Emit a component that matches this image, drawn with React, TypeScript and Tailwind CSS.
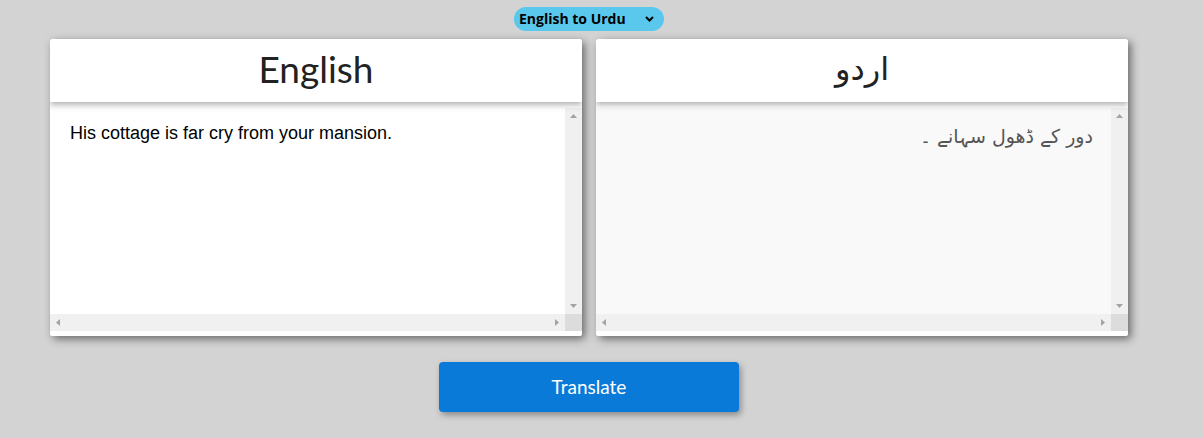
import { useState } from "react";

function ScrollArrow({ dir }: { dir: "up" | "down" | "left" | "right" }) {
  const paths: Record<string, string> = {
    up: "M0 4 L3.5 0 L7 4 Z",
    down: "M0 0 L7 0 L3.5 4 Z",
    left: "M4 0 L4 7 L0 3.5 Z",
    right: "M0 0 L4 3.5 L0 7 Z",
  };
  const vertical = dir === "up" || dir === "down";
  return (
    <svg
      width={vertical ? 7 : 4}
      height={vertical ? 4 : 7}
      viewBox={vertical ? "0 0 7 4" : "0 0 4 7"}
    >
      <path d={paths[dir]} fill="#a3a3a3" />
    </svg>
  );
}

function Panel({
  title,
  text,
  rtl,
}: {
  title: string;
  text: string;
  rtl?: boolean;
}) {
  return (
    <div className="w-[532px] h-[297px] bg-white rounded-[3px] shadow-[3px_3px_8px_rgba(0,0,0,0.5)] flex flex-col overflow-hidden">
      <div className="relative z-10 h-[63px] shrink-0 bg-white flex items-center justify-center shadow-[0_3px_6px_rgba(0,0,0,0.3)]">
        <span
          className={`${rtl ? "text-[32px]" : "text-[37px]"} text-[#222] leading-none pb-[4px]`}
          style={{ fontFamily: rtl ? "'DejaVu Sans', sans-serif" : "Lato, sans-serif" }}
        >
          {title}
        </span>
      </div>
      <div className={`flex-1 flex flex-col mt-[6px] ${rtl ? "bg-[#f9f9f9]" : "bg-white"}`}>
        <div className="flex-1 flex">
          <div
            dir={rtl ? "rtl" : "ltr"}
            className={`flex-1 ${
              rtl
                ? "pt-[14px] pr-[18px] text-[19px] text-[#555] font-['DejaVu_Sans',sans-serif]"
                : "pt-[12px] pl-[20px] text-[18px] text-black font-['Liberation_Sans',Arial,sans-serif]"
            }`}
          >
            {text}
          </div>
          <div className="w-[17px] bg-[#f0f0f0] flex flex-col items-center justify-between py-[6px]">
            <ScrollArrow dir="up" />
            <ScrollArrow dir="down" />
          </div>
        </div>
        <div className="h-[17px] flex">
          <div className="flex-1 bg-[#f0f0f0] flex items-center justify-between px-[6px]">
            <ScrollArrow dir="left" />
            <ScrollArrow dir="right" />
          </div>
          <div className="w-[17px] bg-[#dcdcdc]" />
        </div>
        <div className="h-[5px] bg-white" />
      </div>
    </div>
  );
}

export default function App() {
  const [direction] = useState("English to Urdu");

  return (
    <div className="min-h-[438px] bg-[#d3d3d3]">
      <div className="w-[1178px] flex flex-col items-center pt-[7px]">
        <div className="h-[24px] w-[150px] rounded-full bg-[#5ac8ec] flex items-center justify-between pl-[5px] pr-[10px]">
          <span className="text-[14px] font-bold text-black font-['Open_Sans',sans-serif] leading-none">
            {direction}
          </span>
          <svg width="9" height="6" viewBox="0 0 9 6">
            <path d="M1 1 L4.5 4.5 L8 1" stroke="#000" strokeWidth="2" fill="none" />
          </svg>
        </div>
        <div className="flex gap-[14px] mt-[8px]">
          <Panel title="English" text="His cottage is far cry from your mansion." />
          <Panel title="اردو" text="دور کے ڈھول سہانے ۔" rtl />
        </div>
        <button className="mt-[26px] w-[300px] h-[50px] rounded-[4px] bg-[#0a7ad9] text-white text-[19px] font-['Lato',sans-serif] shadow-[2px_3px_6px_rgba(0,0,0,0.35)]">
          Translate
        </button>
      </div>
    </div>
  );
}
